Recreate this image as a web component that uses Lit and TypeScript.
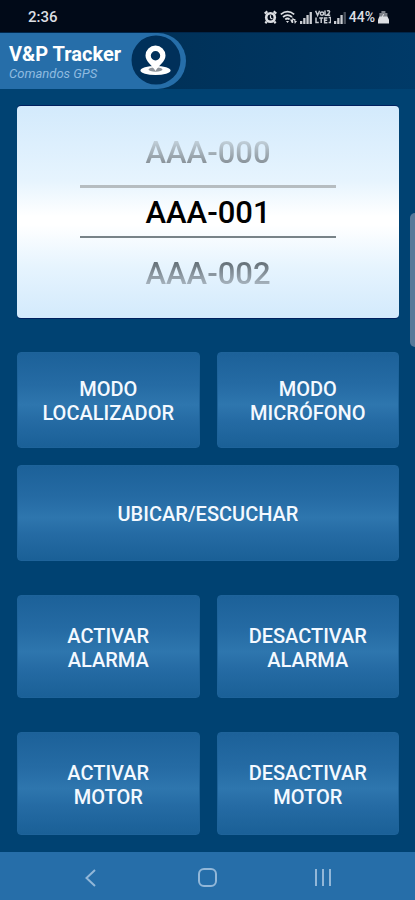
import { LitElement, html, css, svg } from "lit";
import { customElement, property, state } from "lit/decorators.js";
import { classMap } from "lit/directives/class-map.js";

@customElement("status-bar")
class StatusBar extends LitElement {
  static styles = css`
    :host {
      display: flex;
      align-items: center;
      justify-content: space-between;
      height: 32px;
      padding: 2px 26px 0 28px;
      box-sizing: border-box;
      background: #010a18;
      color: #dcdfe3;
      font: 500 15px/20px Roboto, "Noto Sans", sans-serif;
    }
    .icons {
      display: flex;
      align-items: center;
      gap: 3px;
      font-size: 14px;
    }
    svg {
      display: block;
    }
  `;

  private bars(dimFrom: number) {
    return svg`${[0, 1, 2, 3].map(
      (i) => svg`<rect x=${i * 3.2} y=${10 - i * 3} width="2.3" height=${3 + i * 3}
        fill="#d5d8dc" opacity=${i >= dimFrom ? 0.35 : 0.95} />`
    )}`;
  }

  render() {
    return html`
      <span>2:36</span>
      <span class="icons">
        <svg width="13" height="14" viewBox="0 0 14 14" aria-label="Alarma">
          <circle cx="7" cy="7.5" r="6" fill="#dcdfe3" />
          <path d="M0.8 3.4 3.6 1M13.2 3.4 10.4 1M3 12l-1.6 1.6M11 12l1.6 1.6" stroke="#dcdfe3" stroke-width="2.4" />
          <circle cx="7" cy="7.5" r="3.2" fill="#010a18" />
          <path d="M7 5v3l2 1" fill="none" stroke="#dcdfe3" stroke-width="1.3" />
        </svg>
        <svg width="17" height="14" viewBox="0 0 17 14" aria-label="Wi-Fi">
          <g fill="none" stroke="#dcdfe3" stroke-width="1.7">
            <path d="M0.8 4.4Q7.5-1 14.2 4.4" />
            <path d="M3 7Q7.5 3.3 12 7" />
            <path d="M5.2 9.4Q7.5 7.6 9.6 9.4" />
          </g>
          <path d="M6 11h3l-1.5 2zM10 9.5h2.4V7l2.2 3h-1.4v3h-1.4zM14 9h1.4v2H17l-2.2 3z" fill="#dcdfe3" />
        </svg>
        <svg width="12" height="13" viewBox="0 0 12 13" aria-label="Señal 1">${this.bars(4)}</svg>
        <svg width="16" height="14" viewBox="0 0 16 14" aria-label="VoLTE 2">
          <g fill="none" stroke="#c6cad0" stroke-width="1.5">
            <path d="M0.6 0.8 2.6 5.4 4.6 0.8M10 0.6v4.8M12 1.2q2-1.4 2.6.6 0 1.4-2.6 3.4h3.2" />
            <circle cx="7" cy="3.6" r="1.7" />
            <path d="M1 7.4v5.2h2.8M4.2 8h4M6.2 8v5M12.4 7.9H9.6v4.8h2.8M9.6 10.2h2.6M13.6 7.4h2v5.2h-2" />
          </g>
        </svg>
        <svg width="12" height="13" viewBox="0 0 12 13" aria-label="Señal 2">${this.bars(3)}</svg>
        <span>44%</span>
        <svg width="11" height="14" viewBox="0 0 11 14" aria-label="Batería">
          <path d="M3.4 1h4v2h2v4h-8V3h2z" fill="#7b8088" />
          <path d="M1.4 6.6h8L11 9.6V13.4H0V9.6z" fill="#dcdfe3" />
          <path d="M5.6 4 3.8 8h3L5.2 12" fill="none" stroke="#dcdfe3" />
        </svg>
      </span>
    `;
  }
}

@customElement("app-header")
class AppHeader extends LitElement {
  static styles = css`
    :host {
      display: flex;
      background: linear-gradient(90deg, #003158 40%, #003a68);
      border-top: 1px solid #00264a;
      font-family: Roboto, "Noto Sans", sans-serif;
    }
    .brand {
      display: flex;
      align-items: center;
      gap: 10px;
      height: 56px;
      padding: 0 5px 2px 9px;
      box-sizing: border-box;
      border-radius: 0 28px 28px 0;
      background: #266ea9;
    }
    .titles {
      padding-top: 4px;
    }
    h1 {
      margin: 0;
      color: #fff;
      font-size: 20px;
      font-weight: 700;
      line-height: 23px;
    }
    p {
      margin: 0;
      color: #8fbbe0;
      font-size: 13px;
      font-style: italic;
      line-height: 15px;
    }
    .badge {
      display: block;
      flex: none;
    }
  `;

  render() {
    return html`
      <div class="brand">
        <div class="titles">
          <h1>V&amp;P Tracker</h1>
          <p>Comandos GPS</p>
        </div>
        <svg class="badge" width="50" height="50" viewBox="0 0 50 50" aria-hidden="true">
          <circle cx="25" cy="25" r="24.5" fill="#00305a" />
          <ellipse cx="24.500" cy="35.500" rx="15" ry="4.600" fill="#fff" />
          <ellipse cx="24.500" cy="34.500" rx="7" ry="2.200" fill="#8c9299" />
          <path
            d="M24.500 10.500a10 10 0 0 0-10 10c0 6.200 7 10 10 15.500 3-5.500 10-9.300 10-15.500a10 10 0 0 0-10-10zm0 5.500a4.700 4.700 0 1 1 0 9.400 4.700 4.700 0 0 1 0-9.400z"
            fill="#fff"
            fill-rule="evenodd"
          />
        </svg>
      </div>
    `;
  }
}

@customElement("plate-picker")
class PlatePicker extends LitElement {
  @property({ type: Array }) plates: string[] = [];
  @state() private index = 1;

  static styles = css`
    :host {
      display: flex;
      flex-direction: column;
      align-items: center;
      box-sizing: border-box;
      height: 212px;
      padding-top: 19px;
      border-radius: 4px;
      background: linear-gradient(#d3eafc, #e6f4fe 35%, #fff 52%, #fff 56%, #e6f4fe 76%, #d3eafc);
      box-shadow: 0 1px #00205f, 0 -1px #00205f;
    }
    button {
      display: block;
      box-sizing: border-box;
      width: 67%;
      margin: 0;
      padding: 0;
      border: 0;
      background: none;
      color: transparent;
      font: 500 31px/52px Roboto, "Noto Sans", sans-serif;
      text-align: center;
      cursor: pointer;
    }
    span {
      display: block;
      background-clip: text;
      -webkit-background-clip: text;
    }
    .before {
      height: 60px;
      padding-bottom: 4px;
    }
    .after {
      height: 62px;
      padding-top: 10px;
    }
    .before span {
      background-image: linear-gradient(#c3d2dc 25%, #828b92 75%);
    }
    .after span {
      background-image: linear-gradient(#616c73 25%, #aebbc6 75%);
    }
    .current {
      height: 53px;
      padding-top: 2px;
      border-top: 3px solid #b6bdc1;
      border-bottom: 2px solid #788388;
      line-height: 46px;
      color: #000;
    }
  `;

  render() {
    return html`${this.plates.map((plate, i) => {
      const place = {
        before: i < this.index,
        current: i === this.index,
        after: i > this.index,
      };
      return html`<button
        class=${classMap(place)}
        aria-pressed=${i === this.index}
        @click=${() => (this.index = i)}
      ><span>${plate}</span></button>`;
    })}`;
  }
}

@customElement("nav-bar")
class NavBar extends LitElement {
  static styles = css`
    :host {
      display: grid;
      grid-template-columns: repeat(3, 28%);
      justify-content: center;
      height: 48px;
      background: #266ea9;
    }
    button {
      display: flex;
      align-items: center;
      justify-content: center;
      padding: 4px 0 0;
      border: 0;
      background: none;
      color: #92b7d8;
      cursor: pointer;
    }
    svg {
      fill: none;
      stroke: currentColor;
      stroke-width: 2;
    }
  `;

  render() {
    return html`
      <button aria-label="Atrás">
        <svg width="20" height="20" viewBox="0 0 20 20"><path d="M14 2 5.500 10l8.500 8" /></svg>
      </button>
      <button aria-label="Inicio">
        <svg width="20" height="20" viewBox="0 0 20 20"><rect x="1" y="1" width="17" height="17" rx="5" /></svg>
      </button>
      <button aria-label="Recientes">
        <svg width="20" height="20" viewBox="0 0 20 20"><path d="M2 1v17M9 1v17M16 1v17" /></svg>
      </button>
    `;
  }
}

@customElement("app-root")
class AppRoot extends LitElement {
  static styles = css`
    :host {
      display: flex;
      flex-direction: column;
      position: relative;
      min-height: 100vh;
      background: #004272;
      font-family: Roboto, "Noto Sans", sans-serif;
    }
    main {
      flex: 1;
      display: flex;
      flex-direction: column;
      gap: 34px;
      padding: 17px 16px 17px 17px;
    }
    .group {
      display: grid;
      grid-template-columns: 1fr 1fr;
      gap: 17px;
    }
    .command {
      min-height: 103px;
      padding: 2px 16px 0;
      border: 1px solid #1e639a;
      border-radius: 4px;
      background: linear-gradient(#1c6199, #256ba4 34%, #2e76ae 55%, #256ba4 72%, #1a6097);
      color: #f4f9ff;
      font: 500 20px/24px Roboto, "Noto Sans", sans-serif;
      text-transform: uppercase;
      cursor: pointer;
    }
    .short {
      min-height: 96px;
    }
    .wide {
      grid-column: 1 / -1;
    }
    .edge-handle {
      position: absolute;
      top: 213px;
      right: 0;
      width: 5px;
      height: 134px;
      padding: 0;
      border: 0;
      border-radius: 5px 0 0 5px;
      background: #56799a;
    }
  `;

  render() {
    return html`
      <status-bar></status-bar>
      <app-header></app-header>
      <main>
        <plate-picker .plates=${["AAA-000", "AAA-001", "AAA-002"]}></plate-picker>
        <div class="group">
          <button class="command short">Modo<br />localizador</button>
          <button class="command short">Modo<br />micrófono</button>
          <button class="command short wide">Ubicar/Escuchar</button>
        </div>
        <div class="group">
          <button class="command">Activar<br />alarma</button>
          <button class="command">Desactivar<br />alarma</button>
        </div>
        <div class="group">
          <button class="command">Activar<br />motor</button>
          <button class="command">Desactivar<br />motor</button>
        </div>
      </main>
      <nav-bar></nav-bar>
      <button class="edge-handle" aria-label="Panel lateral"></button>
    `;
  }
}
